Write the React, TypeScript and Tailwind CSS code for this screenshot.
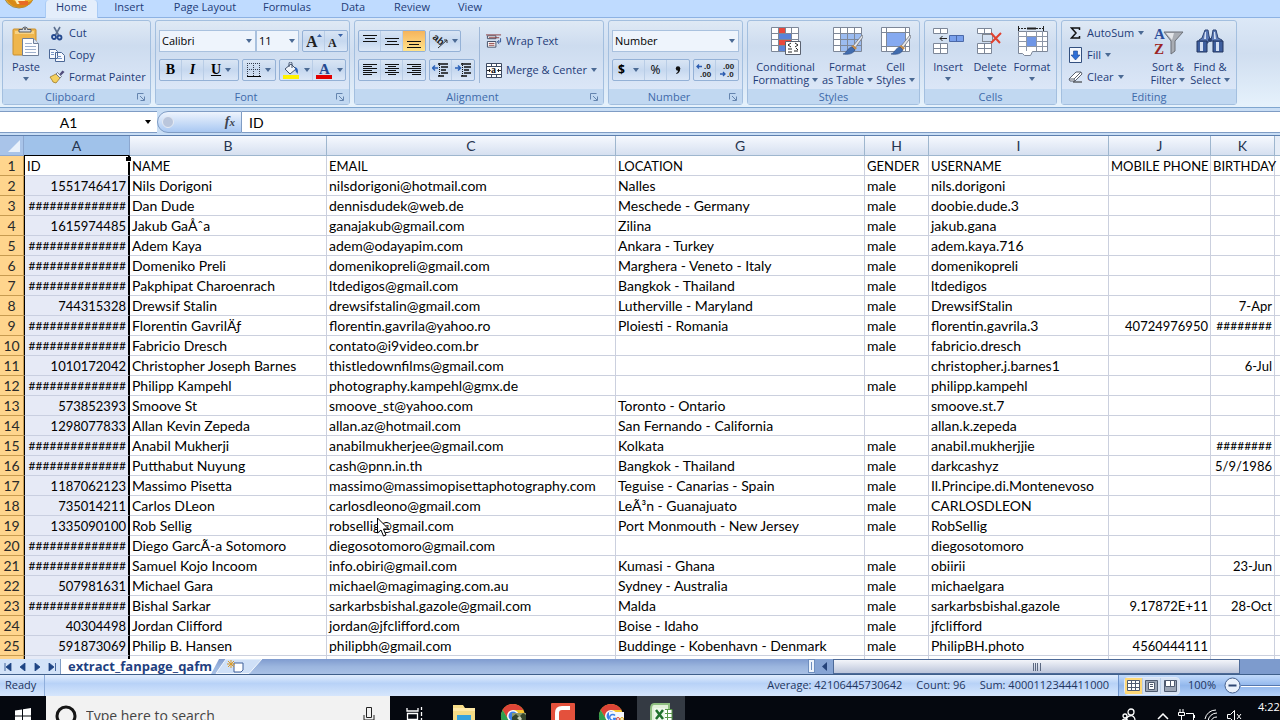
import React from "react";

type Kids = { children?: React.ReactNode };

const rows: string[][] = [
  ["ID", "NAME", "EMAIL", "LOCATION", "GENDER", "USERNAME", "MOBILE PHONE", "BIRTHDAY"],
  ["1551746417", "Nils Dorigoni", "nilsdorigoni@hotmail.com", "Nalles", "male", "nils.dorigoni", "", ""],
  ["##############", "Dan Dude", "dennisdudek@web.de", "Meschede - Germany", "male", "doobie.dude.3", "", ""],
  ["1615974485", "Jakub GaÅˆa", "ganajakub@gmail.com", "Zilina", "male", "jakub.gana", "", ""],
  ["##############", "Adem Kaya", "adem@odayapim.com", "Ankara - Turkey", "male", "adem.kaya.716", "", ""],
  ["##############", "Domeniko Preli", "domenikopreli@gmail.com", "Marghera - Veneto - Italy", "male", "domenikopreli", "", ""],
  ["##############", "Pakphipat Charoenrach", "ltdedigos@gmail.com", "Bangkok - Thailand", "male", "ltdedigos", "", ""],
  ["744315328", "Drewsif Stalin", "drewsifstalin@gmail.com", "Lutherville - Maryland", "male", "DrewsifStalin", "", "7-Apr"],
  ["##############", "Florentin GavrilÄƒ", "florentin.gavrila@yahoo.ro", "Ploiesti - Romania", "male", "florentin.gavrila.3", "40724976950", "########"],
  ["##############", "Fabricio Dresch", "contato@i9video.com.br", "", "male", "fabricio.dresch", "", ""],
  ["1010172042", "Christopher Joseph Barnes", "thistledownfilms@gmail.com", "", "", "christopher.j.barnes1", "", "6-Jul"],
  ["##############", "Philipp Kampehl", "photography.kampehl@gmx.de", "", "male", "philipp.kampehl", "", ""],
  ["573852393", "Smoove St", "smoove_st@yahoo.com", "Toronto - Ontario", "", "smoove.st.7", "", ""],
  ["1298077833", "Allan Kevin Zepeda", "allan.az@hotmail.com", "San Fernando - California", "", "allan.k.zepeda", "", ""],
  ["##############", "Anabil Mukherji", "anabilmukherjee@gmail.com", "Kolkata", "male", "anabil.mukherjjie", "", "########"],
  ["##############", "Putthabut Nuyung", "cash@pnn.in.th", "Bangkok - Thailand", "male", "darkcashyz", "", "5/9/1986"],
  ["1187062123", "Massimo Pisetta", "massimo@massimopisettaphotography.com", "Teguise - Canarias - Spain", "male", "Il.Principe.di.Montenevoso", "", ""],
  ["735014211", "Carlos DLeon", "carlosdleono@gmail.com", "LeÃ³n - Guanajuato", "male", "CARLOSDLEON", "", ""],
  ["1335090100", "Rob Sellig", "robsellig@gmail.com", "Port Monmouth - New Jersey", "male", "RobSellig", "", ""],
  ["##############", "Diego GarcÃ-a Sotomoro", "diegosotomoro@gmail.com", "", "", "diegosotomoro", "", ""],
  ["##############", "Samuel Kojo Incoom", "info.obiri@gmail.com", "Kumasi - Ghana", "male", "obiirii", "", "23-Jun"],
  ["507981631", "Michael Gara", "michael@magimaging.com.au", "Sydney - Australia", "male", "michaelgara", "", ""],
  ["##############", "Bishal Sarkar", "sarkarbsbishal.gazole@gmail.com", "Malda", "male", "sarkarbsbishal.gazole", "9.17872E+11", "28-Oct"],
  ["40304498", "Jordan Clifford", "jordan@jfclifford.com", "Boise - Idaho", "male", "jfclifford", "", ""],
  ["591873069", "Philip B. Hansen", "philipbh@gmail.com", "Buddinge - Kobenhavn - Denmark", "male", "PhilipBH.photo", "4560444111", ""],
];

const columns = [
  { name: "A", width: "w-[106px]" },
  { name: "B", width: "w-[197px]" },
  { name: "C", width: "w-[289px]" },
  { name: "G", width: "w-[249px]" },
  { name: "H", width: "w-16" },
  { name: "I", width: "w-[180px]" },
  { name: "J", width: "w-[102px]" },
  { name: "K", width: "w-16" },
];

const Arrow = ({ dark }: { dark?: boolean }) => (
  <svg width="6" height="4" viewBox="0 0 6 4" className="shrink-0" aria-hidden="true">
    <path d="M0 0h6L3 4z" fill={dark ? "#000" : "#4b6a94"} />
  </svg>
);

const Group = ({ title, className, launcher, children }: Kids & { title: string; className: string; launcher?: boolean }) => (
  <section
    aria-label={title}
    className={`flex h-[85px] shrink-0 flex-col rounded-[3px] border border-[#a3bfdf] bg-linear-to-b from-[#dfe9f5] via-[#cddcef] via-30% to-[#e0eafa] ${className}`}
  >
    <div className="flex h-[68px] shrink-0">{children}</div>
    <div className="flex h-[15px] items-center bg-[#c1d8f1] pt-px text-[#3e6aaa]">
      <span className="flex-1 text-center leading-[14px]">{title}</span>
      {launcher && (
        <button aria-label={`${title} options`} className="mr-1">
          <svg width="9" height="9" viewBox="0 0 9 9" fill="none" stroke="#6484ae">
            <path d="M.5 6.500V.5H6.500M3 3l4 4M7.500 3.500v4h-4" />
          </svg>
        </button>
      )}
    </div>
  </section>
);

const Strip = ({ children }: Kids) => (
  <div className="flex h-[22px] divide-x divide-[#b9cde6] rounded-[2px] border border-[#94b1d6] bg-linear-to-b from-[#d9e5f4] via-[#c6d8ef] to-[#dbe7f7]">
    {children}
  </div>
);

const Tool = ({ label, className = "w-[22px]", children }: Kids & { label: string; className?: string }) => (
  <button aria-label={label} className={`flex items-center justify-center gap-1 ${className}`}>
    {children}
  </button>
);

const Big = ({ icon, lines, arrowBelow, className }: { icon: React.ReactNode; lines: string[]; arrowBelow?: boolean; className: string }) => (
  <button className={`flex flex-col items-center pt-1 text-center leading-[13px] ${className}`}>
    <span className="mb-[3px] flex h-8 items-center">{icon}</span>
    {lines.map((line, i) => (
      <span key={line} className="flex items-center gap-[3px] whitespace-nowrap">
        {line}
        {!arrowBelow && i === lines.length - 1 && <Arrow />}
      </span>
    ))}
    {arrowBelow && <span className="mt-1"><Arrow /></span>}
  </button>
);

const Small = ({ icon, label, arrow }: { icon: React.ReactNode; label: string; arrow?: boolean }) => (
  <button className="flex h-[22px] items-center gap-1 whitespace-nowrap">
    <span className="flex w-4 justify-center">{icon}</span>
    {label}
    {arrow && <Arrow />}
  </button>
);

const Lines = ({ d }: { d: string }) => (
  <svg width="16" height="16" viewBox="0 0 16 16" stroke="#111" fill="none" aria-hidden="true">
    <path d={d} />
  </svg>
);

const PasteIcon = () => (
  <svg width="28" height="32" viewBox="0 0 28 32">
    <rect x="1" y="4" width="23" height="26" rx="1" fill="#efb64c" stroke="#c98f2c" />
    <path d="M3 6h19v3H3z" fill="#f7d283" />
    <path d="M7 7V4.500h3.500a2.500 2.500 0 0 1 5 0H19V7z" fill="#d9dde2" stroke="#555b63" />
    <circle cx="13" cy="4" r="1" fill="#555" />
    <path d="M10.500 13.500h11l5 5v12h-16z" fill="#fdfdff" stroke="#6f7f99" />
    <path d="M21.500 13.500v5h5" fill="#dfe6f2" stroke="#6f7f99" />
    <path d="M13 18.500h7M13 21.500h11M13 24.500h11M13 27.500h11" stroke="#9fb0cc" />
  </svg>
);

const CutIcon = () => (
  <svg width="12" height="15" viewBox="0 0 12 15" fill="none">
    <path d="M3 1l4.500 8M9 1L4.500 9" stroke="#5d7190" strokeWidth="1.600" />
    <circle cx="3" cy="11" r="2" stroke="#24498f" strokeWidth="1.800" />
    <circle cx="8.500" cy="11.500" r="2" stroke="#24498f" strokeWidth="1.800" />
  </svg>
);

const CopyIcon = () => (
  <svg width="16" height="14" viewBox="0 0 16 14" fill="#f8faff" stroke="#4b6796">
    <path d="M.5 1.500h6l2 2v7h-8zM6.500 4.500h6l3 3v6h-9z" />
    <path d="M2 4.500h3M2 6.500h3M8 8.500h4M8 10.500h5" stroke="#7896c6" />
  </svg>
);

const PainterIcon = () => (
  <svg width="16" height="14" viewBox="0 0 16 14">
    <path d="M1 7l6-3 4 4-4 5-3-1-1-2z" fill="#f4d05f" stroke="#9f7a26" strokeWidth=".8" />
    <path d="M7 4l1.500-1.500 4 4L11 8z" fill="#eef1f6" stroke="#5f6778" strokeWidth=".8" />
    <path d="M10.500 4l3-3.500L15.500 2l-3.500 3.500z" fill="#4f4b7a" />
  </svg>
);

const GrowFont = ({ up }: { up?: boolean }) => (
  <svg width="16" height="16" viewBox="0 0 16 16" aria-hidden="true">
    <text x="0" y="14" fontFamily="Liberation Serif" fontWeight="bold" fontSize={up ? 16 : 12} fill="#222">A</text>
    <path d={up ? "M11 4h5l-2.500-3z" : "M10 1h5l-2.500 3z"} fill="#3861a6" />
  </svg>
);

const BorderIcon = () => (
  <svg width="14" height="14" viewBox="0 0 14 14" stroke="#333b4c" fill="none">
    <path d="M0 .5h14M0 6.500h14M.5 0v13M6.500 0v13M12.500 0v13" strokeDasharray="1 1" />
    <path d="M0 13.500h14" stroke="#000" />
  </svg>
);

const FillIcon = () => (
  <svg width="17" height="17" viewBox="0 0 17 17">
    <path d="M2 7l6-5 5 5-6 5z" fill="#f1f5fb" stroke="#43536d" />
    <path d="M6 5V1.500a1.500 1.500 0 0 1 3 0V6" fill="none" stroke="#43536d" />
    <path d="M12 5c3 1 3.500 4 2.500 7-1-2-2-2-2.500-5z" fill="#2f62b5" />
    <path d="M0 13h16v4H0z" fill="#fff200" />
  </svg>
);

const FontColorIcon = () => (
  <svg width="17" height="17" viewBox="0 0 17 17">
    <text x="3" y="12" fontFamily="Liberation Serif" fontWeight="bold" fontSize="15" fill="#24498f">A</text>
    <path d="M0 13h16v4H0z" fill="#e20000" />
  </svg>
);

const OrientationIcon = () => (
  <svg width="16" height="16" viewBox="0 0 16 16">
    <text x="0" y="9" fontFamily="Liberation Sans" fontWeight="bold" fontSize="10" fill="#222" transform="rotate(40 5 7)">ab</text>
    <path d="M6 15L15 7M15 7v3M15 7h-3" stroke="#333" fill="none" />
  </svg>
);

const IndentIcon = ({ right }: { right?: boolean }) => (
  <svg width="17" height="14" viewBox="0 0 17 14" fill="none">
    <path d="M6 1h10M9 4h7M9 7h5M9 10h7M6 13h6" stroke="#111" strokeWidth="1.500" />
    <path d="M7.500 0v14" stroke="#111" strokeDasharray="1 1" />
    <path d={right ? "M0 5h5M3 2.500L5.500 5 3 7.500" : "M1 5h5M3 2.500L.5 5 3 7.500"} stroke="#2c62b8" strokeWidth="1.500" />
  </svg>
);

const WrapIcon = () => (
  <svg width="17" height="15" viewBox="0 0 17 15" fill="#fff" stroke="#3d4a62">
    <path d="M1.500 1.500h9v3h-9zM1.500 7.500h9v6h-9z" />
    <path d="M0 .5h16M3 3.500h11M3 9.500h6M3 11.500h6" stroke="#8b3b3b" />
    <path d="M15.500 4v4h-3M14 6l-2 2 2 2" fill="none" stroke="#2c4f8f" />
  </svg>
);

const MergeIcon = () => (
  <svg width="16" height="15" viewBox="0 0 16 15">
    <path d="M.5.5h15v14H.5z" fill="#fff" stroke="#3d4a62" />
    <path d="M0 3.500h16M0 11.500h16M5.500 0v3M10.500 0v3M5.500 12v3M10.500 12v3" stroke="#3d4a62" />
    <path d="M1 7.500h3M12 7.500h3M3 6l1.500 1.500L3 9M13 6l-1.500 1.500L13 9" fill="none" stroke="#222" />
    <text x="5" y="10" fontFamily="Liberation Serif" fontWeight="bold" fontSize="10" fill="#111">a</text>
  </svg>
);

const DecimalIcon = ({ less }: { less?: boolean }) => (
  <svg width="17" height="15" viewBox="0 0 17 15" fontFamily="Liberation Sans" fontWeight="bold" fontSize="8" fill="#222">
    <text x={less ? 4 : 8} y="6">{less ? ".00" : ".0"}</text>
    <text x={less ? 8 : 4} y="14">{less ? ".0" : ".00"}</text>
    <path d={less ? "M1 11h5M4 9l2 2-2 2" : "M1 3.500h5M3 1.500l-2 2 2 2"} fill="none" stroke="#2c5cb0" strokeWidth="1.300" />
  </svg>
);

const Brush = () => (
  <>
    <path d="M29 9L20 20l2 2 8-11z" fill="#e2e5ea" stroke="#70757f" strokeWidth=".8" />
    <path d="M20 19l4 3-2 2-4-3z" fill="#c28b4b" />
    <path d="M19 21l3 3c-2 4-7 5-12 4 4-1 4-6 9-7z" fill="#416cae" stroke="#2b4a80" strokeWidth=".6" />
  </>
);

const CondIcon = () => (
  <svg width="30" height="30" viewBox="0 0 30 30">
    <path d="M.5 1.500h27v24H.5z" fill="#fff" stroke="#7d8798" />
    <path d="M7 2h7v5H7zM7 13h13v6H7z" fill="#e8483c" />
    <path d="M8 7h12v6H8zM7 19h7v6H7z" fill="#5b83d8" />
    <path d="M7.500 1v25M14.500 1v6M20.500 1v25M0 7.500h28M0 13.500h28M0 19.500h28" stroke="#7d8798" />
    <path d="M14.500 15.500h15v13h-15z" fill="#fff" stroke="#5b6270" />
    <path d="M20 17l-3 2 3 2M17 23h4M24 17l3 2-3 2M17 26h4M23 25h4M25 22l2 2" fill="none" stroke="#222" />
  </svg>
);

const TableIcon = () => (
  <svg width="30" height="30" viewBox="0 0 30 30">
    <path d="M.5 1.500h28v24H.5z" fill="#fff" stroke="#7d8798" />
    <path d="M7 7h21v18H7z" fill="#9cbcf0" />
    <path d="M7.500 1v25M14.500 1v25M21.500 1v25M0 7.500h28M0 13.500h28M0 19.500h28" stroke="#7d8798" />
    <Brush />
  </svg>
);

const CellStyleIcon = () => (
  <svg width="30" height="30" viewBox="0 0 30 30">
    <path d="M.5 1.500h28v24H.5z" fill="#fff" stroke="#7d8798" />
    <path d="M6 7h18v13H6z" fill="#86aaf0" />
    <path d="M5.500 1v25M24.500 1v25M0 6.500h28M0 20.500h28" stroke="#7d8798" />
    <Brush />
  </svg>
);

const InsertIcon = () => (
  <svg width="31" height="30" viewBox="0 0 31 30">
    <path d="M.5 2.500h14v5H.5zM.5 17.500h14v10H.5zM7.500 2.500v5M7.500 17.500v10M.5 22.500h14" fill="#fff" stroke="#7d8798" />
    <path d="M16.500 9.500h14v6h-14zM23.500 9.500v6" fill="#79a0ec" stroke="#4b69a8" />
    <path d="M14 12.500H7M9.500 10L7 12.500 9.500 15" fill="none" stroke="#222" />
  </svg>
);

const DeleteIcon = () => (
  <svg width="26" height="30" viewBox="0 0 26 30">
    <path d="M.5 2.500h14v5H.5zM.5 17.500h14v10H.5zM7.500 2.500v5M7.500 17.500v10M.5 22.500h14" fill="#fff" stroke="#7d8798" />
    <path d="M5.500 8.500h10v7h-10z" fill="none" stroke="#333" strokeDasharray="1 1" />
    <path d="M14 7l9 10M24 7L14 17" stroke="#e0412f" strokeWidth="2" />
  </svg>
);

const FormatIcon = () => (
  <svg width="31" height="31" viewBox="0 0 31 31">
    <path d="M1 2.500h26M1.500 0v5M26.500 0v5" stroke="#222" strokeDasharray="2 1" />
    <path d="M10 2.500h9" stroke="#222" strokeWidth="2" />
    <path d="M1.500 5.500h29v20h-15l-2 4h-6l-2-2h-4z" fill="#fff" stroke="#7d8798" />
    <path d="M10 10h9v10h-9z" fill="#6f96e6" />
    <path d="M9.500 5v20M19.500 5v20M25.500 5v20M1 10.500h29M1 20.500h29M1 15.500h8M20 15.500h10" stroke="#8d97a8" fill="none" />
  </svg>
);

const SigmaIcon = () => (
  <svg width="11" height="12" viewBox="0 0 11 12" fill="none" stroke="#111" strokeLinejoin="miter">
    <path d="M9.500 3V1H1.500L6 6l-4.500 5h8V9" strokeWidth="1.500" />
  </svg>
);

const FillDownIcon = () => (
  <svg width="13" height="16" viewBox="0 0 13 16">
    <path d="M.5.500h12v15H.5z" fill="#f3f7fd" stroke="#33507f" />
    <path d="M4.500 4v4H2l4.500 5L11 8H8.500V4z" fill="#2f6fd6" stroke="#1c478f" strokeWidth=".6" />
  </svg>
);

const EraserIcon = () => (
  <svg width="15" height="12" viewBox="0 0 15 12" strokeLinejoin="round">
    <path d="M1 8l7-7h5l1 2-7 7H2z" fill="#fff" stroke="#5b6270" />
    <path d="M1 8h5l7-7M6 8l1 2" fill="none" stroke="#5b6270" />
    <path d="M5 11h9" stroke="#222" />
  </svg>
);

const SortIcon = () => (
  <svg width="31" height="30" viewBox="0 0 31 30">
    <path d="M11 6h19l-8 9v10l-4 3V15z" fill="#a9adb4" stroke="#6d7178" />
    <path d="M13 7h8l-2 7z" fill="#e3e5e9" />
    <text x="1" y="13" fontFamily="Liberation Serif" fontWeight="bold" fontSize="15" fill="#2b4f9c">A</text>
    <text x="1" y="28" fontFamily="Liberation Serif" fontWeight="bold" fontSize="15" fill="#9c2424">Z</text>
  </svg>
);

const FindIcon = () => (
  <svg width="28" height="28" viewBox="0 0 28 28">
    <path d="M9 3h3l1 6 1 3h1l1-3 1-6h3l2 8 4 2v3h-8v-2h-6v2H3v-3l3-2z" fill="#5b79b5" stroke="#2d4374" />
    <path d="M1 14h10v11H1zM17 14h10v11H17z" fill="#3e5e9e" stroke="#22345f" />
    <path d="M4 15h3v9H4zM20 15h3v9h-3zM9 5h1v7H8zM19 5h-1v7h2z" fill="#d3def2" />
    <circle cx="14" cy="13" r="2" fill="#2d4374" />
  </svg>
);

const Chrome = ({ google }: { google?: boolean }) => (
  <svg width="28" height="26" viewBox="0 0 28 26">
    <circle cx="13" cy="13" r="12" fill="#f4c430" />
    <path d="M2.600 7A12 12 0 0 1 23.400 7H13l-5 9z" fill="#dd4437" />
    <path d="M2.600 7A12 12 0 0 0 13 25l5-9H8z" fill="#2f9e4f" />
    <circle cx="13" cy="13" r="6" fill="#fff" />
    <circle cx="13" cy="13" r="4.500" fill="#3c7fe8" />
    {google ? (
      <>
        <path d="M11 9h15v13H11z" fill="#f4f7fc" />
        <path d="M17 12.500a3 3 0 1 0 .5 3H15" fill="none" stroke="#3c7fe8" strokeWidth="1.500" />
        <circle cx="20" cy="16" r="1.500" fill="none" stroke="#dd4437" />
        <circle cx="24" cy="16" r="1.500" fill="none" stroke="#e0ae1c" />
      </>
    ) : (
      <>
        <path d="M12 10h14v12H12z" fill="#8b9a72" />
        <path d="M12 14l4-3 3 3 4-4 3 2v10H12z" fill="#33452c" />
        <path d="M17 15l3-2 2 3-2 2z" fill="#c7ceb4" />
      </>
    )}
  </svg>
);

const Select = ({ label, value, className }: { label: string; value: string; className: string }) => (
  <div className={`relative h-[22px] ${className}`}>
    <select aria-label={label} className="h-full w-full appearance-none border border-[#a9c1de] bg-[#eef4fc] px-[2px] text-black">
      <option>{value}</option>
    </select>
    <span className="pointer-events-none absolute top-1/2 right-1 flex -translate-y-1/2"><Arrow /></span>
  </div>
);

const tabs = [
  ["Home", "w-[53px]"],
  ["Insert", "w-[62px]"],
  ["Page Layout", "w-[90px]"],
  ["Formulas", "w-[74px]"],
  ["Data", "w-[58px]"],
  ["Review", "w-[60px]"],
  ["View", "w-[56px]"],
];

const glyph = "font-['Liberation_Serif',serif] text-[14px] leading-4 font-bold";

const Ribbon = () => (
  <header className="text-[11px] text-[#1e3c78]">
    <nav aria-label="Ribbon tabs" className="flex h-[18px] border-b border-[#8db2e3] bg-[#bfdbff]">
      <button aria-label="Office" className="mr-2 ml-1 h-9 w-[33px] shrink-0 -translate-y-[26px]">
        <svg width="33" height="36" viewBox="0 0 33 36">
          <circle cx="15" cy="18" r="16" fill="#efb52f" stroke="#9a8a5a" />
          <path d="M1 20a15 15 0 0 0 28 6c-8 5-20 3-28-6z" fill="#d88a17" />
          <path d="M10 24h10l2 6h-9z" fill="#fff0b5" />
          <path d="M14 27h10v4h-8z" fill="#e86a25" />
        </svg>
      </button>
      {tabs.map(([name, width], i) => (
        <button
          key={name}
          className={`h-[18px] shrink-0 pb-1 leading-[14px] ${width} ${i === 0 ? "rounded-t-sm border-x border-[#a9cbf5] bg-[#e4eefb]" : ""}`}
        >
          {name}
        </button>
      ))}
    </nav>
    <div className="flex h-[90px] gap-1 overflow-hidden border-b border-[#7fa6cf] bg-linear-to-b from-[#dce8f7] via-[#d0def0] via-40% to-[#e6f2fc] pt-0.5 pl-0.5">
      <Group title="Clipboard" className="w-[149px]" launcher>
        <Big className="w-[46px]" icon={<PasteIcon />} lines={["Paste"]} arrowBelow />
        <div className="flex flex-col pt-px">
          <Small icon={<CutIcon />} label="Cut" />
          <Small icon={<CopyIcon />} label="Copy" />
          <Small icon={<PainterIcon />} label="Format Painter" />
        </div>
      </Group>
      <Group title="Font" className="w-[195px]" launcher>
        <div className="flex flex-col gap-[7px] px-[3px] pt-[9px]">
          <div className="flex">
            <Select label="Font name" value="Calibri" className="w-[97px]" />
            <Select label="Font size" value="11" className="mr-[3px] w-[43px]" />
            <Strip>
              <Tool label="Grow font"><GrowFont up /></Tool>
              <Tool label="Shrink font"><GrowFont /></Tool>
            </Strip>
          </div>
          <div className="flex gap-[3px] text-black">
            <Strip>
              <Tool label="Bold"><b className={glyph}>B</b></Tool>
              <Tool label="Italic"><i className={glyph}>I</i></Tool>
              <Tool label="Underline" className="w-[34px]"><u className={glyph}>U</u><Arrow /></Tool>
            </Strip>
            <Strip><Tool label="Borders" className="w-8"><BorderIcon /><Arrow /></Tool></Strip>
            <Strip>
              <Tool label="Fill color" className="w-[33px]"><FillIcon /><Arrow /></Tool>
              <Tool label="Font color" className="w-8"><FontColorIcon /><Arrow /></Tool>
            </Strip>
          </div>
        </div>
      </Group>
      <Group title="Alignment" className="w-[250px]" launcher>
        <div className="flex flex-col gap-[7px] pt-[9px] pl-[3px]">
          <div className="flex gap-[3px]">
            <Strip>
              <Tool label="Top align"><Lines d="M1 2.500h14M3 5.500h10M1 8.500h14" /></Tool>
              <Tool label="Middle align"><Lines d="M1 5.500h14M3 8.500h10M1 11.500h14" /></Tool>
              <button aria-label="Bottom align" className="flex w-[22px] items-center justify-center bg-linear-to-b from-[#f5b45c] to-[#ffe38a]"><Lines d="M1 8.500h14M3 11.500h10M1 14.500h14" /></button>
            </Strip>
            <Strip><Tool label="Orientation" className="w-[30px]"><OrientationIcon /><Arrow /></Tool></Strip>
          </div>
          <div className="flex gap-[3px]">
            <Strip>
              <Tool label="Align left"><Lines d="M1 2.500h14M1 4.500h9M1 6.500h14M1 8.500h9M1 10.500h14M1 12.500h9" /></Tool>
              <Tool label="Center"><Lines d="M1 2.500h14M4 4.500h8M1 6.500h14M4 8.500h8M1 10.500h14M4 12.500h8" /></Tool>
              <Tool label="Align right"><Lines d="M1 2.500h14M6 4.500h9M1 6.500h14M6 8.500h9M1 10.500h14M6 12.500h9" /></Tool>
            </Strip>
            <Strip>
              <Tool label="Decrease indent"><IndentIcon /></Tool>
              <Tool label="Increase indent"><IndentIcon right /></Tool>
            </Strip>
          </div>
        </div>
        <div className="mt-1.5 ml-1 flex h-14 flex-col gap-[7px] border-l border-[#9fb8d8] pt-[3px] pl-1.5">
          <Small icon={<WrapIcon />} label="Wrap Text" />
          <Small icon={<MergeIcon />} label="Merge & Center" arrow />
        </div>
      </Group>
      <Group title="Number" className="w-[135px]" launcher>
        <div className="flex flex-col gap-[7px] px-[3px] pt-[9px]">
          <Select label="Number format" value="Number" className="w-[127px]" />
          <div className="flex gap-[3px] text-black">
            <Strip>
              <Tool label="Accounting format" className="w-8"><b className="mr-1 text-xs">$</b><Arrow /></Tool>
              <Tool label="Percent"><span className="text-xs">%</span></Tool>
              <Tool label="Comma style">
                <svg width="6" height="9" viewBox="0 0 6 9"><circle cx="3" cy="2.500" r="2.200" fill="#111" /><path d="M5.200 2.500C5.200 5.500 4 7 1.500 8l-.4-.7C2.800 6.300 3.200 5.500 3 4z" fill="#111" /></svg>
              </Tool>
            </Strip>
            <Strip>
              <Tool label="Increase decimal"><DecimalIcon /></Tool>
              <Tool label="Decrease decimal"><DecimalIcon less /></Tool>
            </Strip>
          </div>
        </div>
      </Group>
      <Group title="Styles" className="w-[173px]">
        <Big className="w-[75px]" icon={<CondIcon />} lines={["Conditional", "Formatting"]} />
        <Big className="w-[49px]" icon={<TableIcon />} lines={["Format", "as Table"]} />
        <Big className="w-[47px]" icon={<CellStyleIcon />} lines={["Cell", "Styles"]} />
      </Group>
      <Group title="Cells" className="w-[133px]">
        <Big className="ml-0.5 w-[42px]" icon={<InsertIcon />} lines={["Insert"]} arrowBelow />
        <Big className="w-[42px]" icon={<DeleteIcon />} lines={["Delete"]} arrowBelow />
        <Big className="w-[42px]" icon={<FormatIcon />} lines={["Format"]} arrowBelow />
      </Group>
      <Group title="Editing" className="w-[176px]">
        <div className="flex w-[85px] flex-col pt-px pl-[5px]">
          <Small icon={<SigmaIcon />} label="AutoSum" arrow />
          <Small icon={<FillDownIcon />} label="Fill" arrow />
          <Small icon={<EraserIcon />} label="Clear" arrow />
        </div>
        <Big className="w-[42px]" icon={<SortIcon />} lines={["Sort &", "Filter"]} />
        <Big className="w-[42px]" icon={<FindIcon />} lines={["Find &", "Select"]} />
      </Group>
    </div>
  </header>
);

const FormulaBar = () => (
  <div className="flex h-7 border-b border-[#5d7fae] bg-[#c9def5] pt-[3px] pb-0.5 font-[Lato,sans-serif] text-[14px] text-black">
    <div className="flex w-[157px] items-center border-y border-[#7f9cc4] bg-white pr-1.5">
      <input aria-label="Name box" defaultValue="A1" className="w-0 flex-1 pr-2 text-center outline-none" />
      <Arrow dark />
    </div>
    <div className="flex w-[85px] items-center justify-between rounded-l-full border border-[#7f9cc4] bg-linear-to-b from-[#eef4fd] to-[#a9c8f2] pr-1.5 pl-1">
      <span className="h-3 w-3 rounded-full border border-[#e6ebf4] bg-[#bac6dc]" />
      <button aria-label="Insert function" className="font-['Liberation_Serif',serif] text-[14px] leading-4 font-bold text-[#3d4350] italic">
        f<span className="text-[11px]">x</span>
      </button>
    </div>
    <input aria-label="Formula" defaultValue="ID" className="flex-1 border-y border-[#7f9cc4] bg-white px-[7px] outline-none" />
  </div>
);

const cellClass = (r: number, c: number, text: string) => {
  const base = "h-5 border-b p-0 whitespace-nowrap";
  const hash = text.startsWith("#");
  const numeric = r > 0 && (c === 0 || c >= 6);
  const align = numeric ? "pr-[2px] text-right" : "pl-[2px] text-left";
  const size = hash ? "text-[12px]" : numeric || r === 0 ? "text-[13px]" : "text-[14px]";
  const edge =
    c === 0
      ? `border-r-2 border-l border-r-black border-l-black border-b-[#c9cfe0] ${r === 0 ? "bg-white" : "bg-[#e6eaf6]"}`
      : "border-r border-[#cbd0de]";
  return `${base} ${align} ${size} ${edge}`;
};

const rowHead = "h-5 border-r border-b border-[#c79b50] bg-[#ffd58d] p-0 text-center font-normal text-[#2a2a2a]";

const Grid = () => (
  <main className="relative min-h-0 flex-1 overflow-hidden bg-white">
    <table className="w-full table-fixed border-separate border-spacing-0 font-[Lato,sans-serif] text-[14px] leading-[18px] text-black">
      <colgroup>
        <col className="w-6" />
        {columns.map((c) => <col key={c.name} className={c.width} />)}
        <col />
      </colgroup>
      <thead>
        <tr className="h-5">
          <th aria-label="Select all" className="border-r border-b border-[#8ca7cf] bg-[#a9c4e9] p-0">
            <svg width="12" height="12" viewBox="0 0 12 12" className="ml-2"><path d="M12 0v12H0z" fill="#e9f1fb" /></svg>
          </th>
          {columns.map((c, i) => (
            <th
              key={c.name}
              scope="col"
              className={`border-r border-b p-0 text-center font-normal text-[#26344f] ${
                i === 0 ? "border-r-[#8ca7cf] border-b-black bg-[#a0c2ea]" : "border-[#9eb6ce] bg-linear-to-b from-[#f6f9fe] to-[#d6e0f0]"
              }`}
            >
              {c.name}
            </th>
          ))}
          <th aria-label="L" className="border-b border-[#9eb6ce] bg-[#e6edf7] p-0" />
        </tr>
      </thead>
      <tbody>
        {rows.map((row, r) => (
          <tr key={r} className="h-5">
            <th scope="row" className={rowHead}>{r + 1}</th>
            {row.map((text, c) => <td key={c} className={cellClass(r, c, text)}>{text}</td>)}
            <td className="border-b border-[#cbd0de] p-0" />
          </tr>
        ))}
        <tr className="h-5">
          <th aria-label="Row 26" className={rowHead} />
          {columns.map((c, i) => <td key={c.name} className={cellClass(1, i, "")} />)}
          <td className="p-0" />
        </tr>
      </tbody>
    </table>
    <span className="absolute top-[21px] left-[126px] h-[5px] w-[5px] border-b border-white bg-black" />
    <svg className="absolute top-[381px] left-[377px]" width="13" height="20" viewBox="0 0 13 20" aria-hidden="true">
      <path d="M.5 1v15l3.500-3 2.500 6 2.500-1-2.500-6h5z" fill="#fff" stroke="#000" />
    </svg>
  </main>
);

const navPaths = ["M2 0v8M8 0v8L3 4z", "M7 0v8L2 4z", "M2 0v8l5-4z", "M1 0v8l5-4zM7.500 0v8"];
const navNames = ["First sheet", "Previous sheet", "Next sheet", "Last sheet"];

const SheetBar = () => (
  <div className="flex h-4 border-b border-[#3f5f8a] bg-linear-to-b from-[#7f9bcf] via-[#9bb5de] to-[#a9c1e6]">
    <div className="flex w-[61px] items-center justify-around border-r border-[#7f9cc4] bg-[#d3e3f8]">
      {navPaths.map((d, i) => (
        <button key={d} aria-label={navNames[i]}>
          <svg width="9" height="8" viewBox="0 0 9 8" fill="#1f4584" stroke="#1f4584" strokeWidth=".8"><path d={d} /></svg>
        </button>
      ))}
    </div>
    <button className="w-[158px] bg-white text-center text-[13px] leading-[15px] font-bold text-[#1f3f7f] [clip-path:polygon(0_0,100%_0,95%_100%,0_100%)]">
      extract_fanpage_qafm
    </button>
    <button aria-label="Insert worksheet" className="-ml-1">
      <svg width="48" height="15" viewBox="0 0 48 15">
        <path d="M11 0h36L34 14.500H1z" fill="#cfe0f7" stroke="#f2f7fd" />
        <path d="M19 4h9v7l-2 2h-7z" fill="#fff" stroke="#3d5f9a" />
        <path d="M12 5h8M16 1v8M13 2l6 6M19 2l-6 6" stroke="#d89a2a" />
      </svg>
    </button>
    <div className="flex-1" />
    <div className="flex w-[472px]">
      <span className="flex h-[14px] w-[7px] items-center justify-center border border-[#6f8fbf] bg-[#eef4fc]"><span className="h-2 w-px bg-[#6f8fbf]" /></span>
      <button aria-label="Scroll left" className="flex w-[18px] items-center justify-center bg-[#86a4d4]">
        <svg width="5" height="9" viewBox="0 0 5 9"><path d="M5 0v9L0 4.500z" fill="#25437a" /></svg>
      </button>
      <button aria-label="Horizontal scroll" className="flex h-[15px] w-[407px] items-center justify-center gap-px border border-[#4d6a98] bg-linear-to-b from-[#f3f5fa] to-[#bcc5da]">
        <span className="h-2 w-2 border-x border-[#5b6880]"><span className="mx-auto block h-2 w-[3px] border-x border-[#5b6880]" /></span>
      </button>
      <div className="flex-1 bg-[#7d9bcd]" />
    </div>
  </div>
);

const StatusBar = () => (
  <div className="flex h-[21px] items-center bg-linear-to-b from-[#e2eefe] via-[#b8d2f7] via-40% to-[#d6e6fc] text-[11px] text-[#1e3560]">
    <span className="flex h-full w-[45px] items-center border-r border-[#8faedb] pl-[5px]">Ready</span>
    <div className="flex flex-1 justify-end gap-[14px] pr-[9px]">
      <span>Average: 42106445730642</span>
      <span>Count: 96</span>
      <span>Sum: 4000112344411000</span>
    </div>
    <div className="flex h-full w-[162px] items-center border-l border-[#6f94cc] bg-linear-to-b from-[#c3dbfb] via-[#92b7ec] to-[#b4d0f7] pl-[5px]">
      <div className="flex h-[18px] w-14 divide-x divide-[#b9cde6] rounded-sm border border-[#dfe9f8] bg-[#d6e2f3]">
        <Tool label="Normal view" className="w-[18px] bg-[#ffd978]"><svg width="13" height="11" viewBox="0 0 13 11" fill="#fff" stroke="#4f5b70"><path d="M.5.5h12v10H.5zM4.500 0v11M8.500 0v11M0 3.500h13M0 7.500h13" /></svg></Tool>
        <Tool label="Page layout view" className="w-[18px]"><svg width="13" height="12" viewBox="0 0 13 12" fill="#9aa4b4" stroke="#4f5b70"><path d="M.5.5h12v11H.5z" /><path d="M3.500 2.500h6v7h-6zM5 4.500h3M5 6.500h3" fill="#fff" /></svg></Tool>
        <Tool label="Page break view" className="w-[18px]"><svg width="13" height="12" viewBox="0 0 13 12" fill="#fff" stroke="#4f5b70"><path d="M.5.5h12v11H.5z" fill="#9aa4b4" /><path d="M1.500.5h5v6h-5zM6.500.5h4v6h-4z" /></svg></Tool>
      </div>
      <button className="w-11 text-center">100%</button>
      <button aria-label="Zoom out">
        <svg width="17" height="17" viewBox="0 0 17 17"><circle cx="8.500" cy="8.500" r="7.500" fill="#eaf1fb" stroke="#46618f" /><path d="M4.500 8.500h8" stroke="#2e4672" strokeWidth="2" /></svg>
      </button>
      <span className="h-[2px] flex-1 border-t border-[#5577ad] bg-white" />
    </div>
  </div>
);

const Taskbar = () => (
  <footer className="h-6 shrink-0 overflow-hidden bg-[#05080f]">
    <div className="flex h-10 items-center text-white">
      <button aria-label="Start" className="flex w-[46px] justify-center">
        <svg width="16" height="16" viewBox="0 0 16 16" fill="#fff"><path d="M0 2.500l7-1V7.500H0zM8 1.300L16 0v7.500H8zM0 8.500h7v6l-7-1zM8 8.500h8V16l-8-1.200z" /></svg>
      </button>
      <label className="flex h-full w-[344px] items-center bg-[#f2f2f2] pl-[9px] text-[#444]">
        <svg width="22" height="22" viewBox="0 0 22 22" className="shrink-0"><circle cx="11" cy="11" r="9" fill="none" stroke="#151515" strokeWidth="3" /></svg>
        <input aria-label="Search" placeholder="Type here to search" className="ml-[9px] w-0 flex-1 text-sm outline-none placeholder:text-[#444]" />
        <svg width="12" height="18" viewBox="0 0 12 18" className="mr-[15px]" fill="none" stroke="#222"><path d="M3.500.5h5v10h-5zM1 8v5h10V8M6 13v4" /></svg>
      </label>
      <button aria-label="Task view" className="flex w-[49px] justify-center">
        <svg width="18" height="18" viewBox="0 0 18 18" fill="none" stroke="#fff"><path d="M1 1v3h11V1M1.500 6.500h10v6h-10zM1 17v-2h11v2M15.500 0v3M15.500 5v4M15.500 11v6" strokeWidth="1.300" /></svg>
      </button>
      <button aria-label="File Explorer" className="flex w-[50px] justify-center">
        <svg width="22" height="24" viewBox="0 0 22 24"><path d="M0 1h10l2 3h10v19H0z" fill="#f6dc86" /><path d="M0 4h22v3H0z" fill="#ffe9a6" /><path d="M4 11h14v12H4z" fill="#37a3de" /></svg>
      </button>
      <button aria-label="Chrome" className="flex w-[50px] justify-center"><Chrome /></button>
      <button aria-label="Camtasia" className="flex w-[48px] justify-center">
        <svg width="24" height="26" viewBox="0 0 24 26"><rect width="24" height="26" rx="1" fill="#e4513c" /><path d="M19 5h-8q-5 0-5 5v12" fill="none" stroke="#fff" strokeWidth="4" /></svg>
      </button>
      <button aria-label="Chrome, second profile" className="flex w-[50px] justify-center"><Chrome google /></button>
      <button aria-label="Excel" className="flex h-full w-12 items-center justify-center bg-[#343a43]">
        <svg width="24" height="26" viewBox="0 0 24 26"><path d="M5 1h15v23H2V6q0-5 3-5z" fill="#e1f0d8" stroke="#8fbf80" strokeWidth="2" /><path d="M14 6.500h9v16h-9zM14 10.500h9M14 14.500h9M18.500 6v16" fill="#fff" stroke="#5a9a4a" /><path d="M5 5h11v14H5z" fill="#eef7ea" /><path d="M7 7l7 9M14 7l-7 9" stroke="#20702c" strokeWidth="2.500" /></svg>
      </button>
      <div className="flex flex-1 items-center justify-end gap-[9px]">
        <svg width="15" height="17" viewBox="0 0 15 17" fill="none" stroke="#fff" strokeWidth="1.300" className="mr-3"><circle cx="10" cy="4" r="3" /><circle cx="4" cy="8" r="2" /><path d="M5 14c0-8 9-8 9-2M1 14c0-4 6-4 6 0" /></svg>
        <svg width="12" height="7" viewBox="0 0 12 7" fill="none" stroke="#fff" strokeWidth="1.500"><path d="M1 6l5-5 5 5" /></svg>
        <svg width="17" height="14" viewBox="0 0 17 14" fill="none" stroke="#fff"><path d="M2 0v3M5 0v3M.5 3.500h6v3h-6zM3.500 7v6M8 4.500h7.500v7H5M16.500 6v3" /></svg>
        <svg width="14" height="14" viewBox="0 0 14 14" fill="none" stroke="#fff"><path d="M1 10A11 11 0 0 1 12 1M4 12A9 9 0 0 1 13 4M7 13a6 6 0 0 1 6-5" /></svg>
        <svg width="15" height="13" viewBox="0 0 15 13" fill="none" stroke="#fff"><path d="M.5 4.500h3l4-4v12l-4-4h-3zM10 4l4 5M14 4l-4 5" /></svg>
      </div>
      <time className="w-[38px] shrink-0 self-start pt-[3px] pl-4 text-[11px] leading-4">4:22</time>
    </div>
  </footer>
);

export default function App() {
  return (
    <div className="flex h-screen flex-col overflow-hidden font-['Open_Sans','Noto_Sans',sans-serif]">
      <Ribbon />
      <FormulaBar />
      <Grid />
      <SheetBar />
      <StatusBar />
      <Taskbar />
    </div>
  );
}
